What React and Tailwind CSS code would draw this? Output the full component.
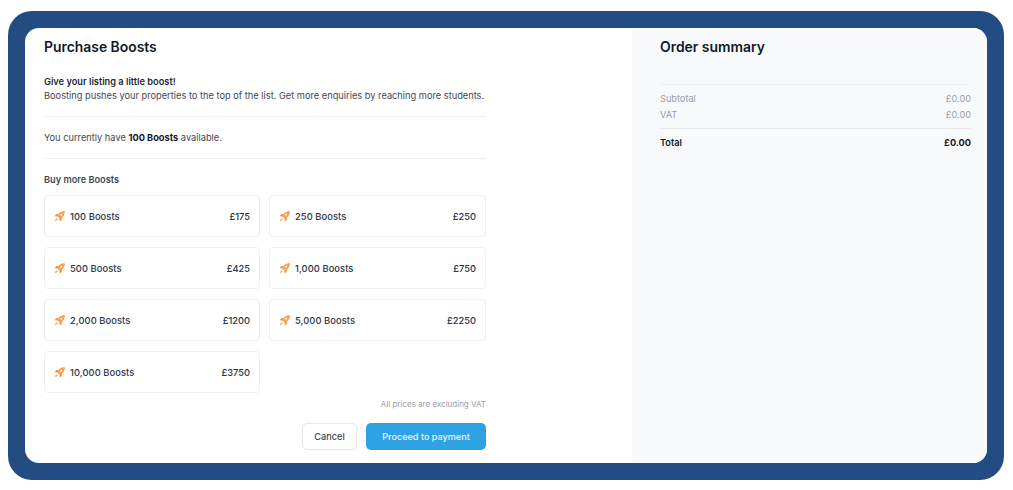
import React from 'react';

const packs = [
  { name: '100 Boosts', price: '£175' },
  { name: '250 Boosts', price: '£250' },
  { name: '500 Boosts', price: '£425' },
  { name: '1,000 Boosts', price: '£750' },
  { name: '2,000 Boosts', price: '£1200' },
  { name: '5,000 Boosts', price: '£2250' },
  { name: '10,000 Boosts', price: '£3750' },
];

function Rocket() {
  return (
    <svg width="11" height="11" viewBox="0 0 12 12" fill="none" className="shrink-0">
      <path d="M11.300.7C8.600.8 6 2 4.500 4L3.500 5.300l3.200 3.200L8 7.500c2-1.500 3.200-4.100 3.300-6.800z" fill="#f9a45c" stroke="#f7943c" strokeWidth="1" strokeLinejoin="round" />
      <circle cx="7.800" cy="4.200" r="1.100" fill="#fff3e6" />
      <path d="M4.600 3.400H2.500L.6 5.600l2.700.5zM8.600 7.400v2.100l-2.200 1.900-.5-2.700z" fill="#f7943c" />
      <path d="M2.700 8.300 1.500 10.500l2.200-1.200" stroke="#f9b27a" strokeWidth="1.100" strokeLinecap="round" strokeLinejoin="round" />
    </svg>
  );
}

function PackCard({ name, price }) {
  return (
    <div className="h-[42px] pt-[1px] flex items-center justify-between pl-[9px] pr-[9px] border border-[#eef0f3] rounded-[4px] bg-white">
      <div className="flex items-center gap-[5px]">
        <Rocket />
        <span className="text-[9.3px] tracking-[0.01em] font-medium text-[#2b3443]">{name}</span>
      </div>
      <span className="text-[9.3px] font-medium text-[#2b3443]">{price}</span>
    </div>
  );
}

export default function App() {
  return (
    <div className="w-[1013px] h-[490px] bg-white pt-[11px] pl-[8px] font-['Inter',sans-serif]">
      <div className="w-[996px] h-[469px] bg-[#224c82] rounded-[24px] p-[17px]">
        <div className="w-[962px] h-[435px] bg-white rounded-[14px] overflow-hidden flex">
          <div className="w-[607px] pl-[19px] pt-[11px]">
            <div className="w-[442px]">
              <h1 className="text-[13.9px] leading-[16px] font-semibold text-[#111827]">Purchase Boosts</h1>
              <div className="mt-[20px] pb-[13px] border-b border-[#eef0f2] text-[9.25px] leading-[14px] text-[#3f4653]">
                <p className="font-semibold text-[#1f2937]">Give your listing a little boost!</p>
                <p className="whitespace-nowrap">Boosting pushes your properties to the top of the list. Get more enquiries by reaching more students.</p>
              </div>
              <p className="pt-[14px] pb-[13px] border-b border-[#eef0f2] text-[9.25px] leading-[14px] text-[#3f4653]">
                You currently have <span className="font-bold text-[#111827]">100 Boosts</span> available.
              </p>
              <h2 className="mt-[14px] text-[9.2px] leading-[14px] font-semibold text-[#3f4653]">Buy more Boosts</h2>
              <div className="mt-[8px] grid grid-cols-[216px_217px] gap-x-[9px] gap-y-[10px]">
                {packs.map((p) => (
                  <PackCard key={p.name} name={p.name} price={p.price} />
                ))}
              </div>
              <p className="mt-[5px] text-right text-[8px] leading-[12px] text-[#9a9ea6]">All prices are excluding VAT</p>
              <div className="mt-[13px] flex justify-end gap-[9px]">
                <button className="w-[55px] h-[27px] border border-[#e5e7eb] rounded-[5px] bg-white text-[9.2px] font-medium text-[#3f4653]">Cancel</button>
                <button className="w-[120px] h-[27px] rounded-[5px] bg-[#2fa2e3] text-[9.1px] font-medium text-[#eaf6fd]">Proceed to payment</button>
              </div>
            </div>
          </div>
          <div className="flex-1 bg-[#f8f9fb] pl-[28px] pr-[16px] pt-[11px]">
            <h2 className="text-[13.9px] leading-[16px] font-semibold text-[#111827]">Order summary</h2>
            <div className="mt-[29px] border-t border-[#f0f1f4] pt-[6px] pb-[5px] text-[9.2px] leading-[16px] text-[#9a9ea6]">
              <div className="flex justify-between"><span>Subtotal</span><span>£0.00</span></div>
              <div className="flex justify-between"><span>VAT</span><span>£0.00</span></div>
            </div>
            <div className="border-t border-[#e8eaee] pt-[7px] flex justify-between text-[9.2px] leading-[14px] font-semibold text-[#111827]">
              <span>Total</span><span className="font-bold">£0.00</span>
            </div>
          </div>
        </div>
      </div>
    </div>
  );
}
